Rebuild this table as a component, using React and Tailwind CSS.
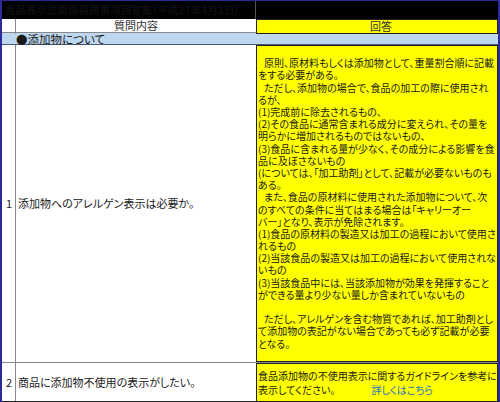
const answer1 = [
  { t: '原則、原材料もしくは添加物として、重量割合順に記載', indent: true },
  { t: 'をする必要がある。' },
  { t: 'ただし、添加物の場合で、食品の加工の際に使用され', indent: true },
  { t: 'るが、' },
  { t: '(1)完成前に除去されるもの、' },
  { t: '(2)その食品に通常含まれる成分に変えられ、その量を' },
  { t: '明らかに増加されるものではないもの、' },
  { t: '(3)食品に含まれる量が少なく、その成分による影響を食' },
  { t: '品に及ぼさないもの' },
  { t: '(については、「加工助剤」として、記載が必要ないものも' },
  { t: 'ある。' },
  { t: 'また、食品の原材料に使用された添加物について、次', indent: true },
  { t: 'のすべての条件に当てはまる場合は「キャリーオー' },
  { t: 'バー」となり、表示が免除されます。' },
  { t: '(1)食品の原材料の製造又は加工の過程において使用さ' },
  { t: 'れるもの' },
  { t: '(2)当該食品の製造又は加工の過程において使用されな' },
  { t: 'いもの' },
  { t: '(3)当該食品中には、当該添加物が効果を発揮すること' },
  { t: 'ができる量より少ない量しか含まれていないもの' },
  { t: '' },
  { t: 'ただし、アレルゲンを含む物質であれば、加工助剤とし', indent: true },
  { t: 'て添加物の表記がない場合であっても必ず記載が必要' },
  { t: 'となる。' },
]

const font = "font-['Noto_Sans_CJK_JP','Noto_Sans',sans-serif] [font-feature-settings:'palt']"

function App() {
  return (
    <div className={`w-[500px] h-[402px] bg-white overflow-hidden border-t border-l-2 border-r-2 border-[#2a2a9c] text-[#1a1a1a] ${font}`}>
      {/* title bar */}
      <div className="h-[18px] bg-black grid grid-cols-[254px_1fr]">
        <div className="border-r border-[#555] pl-[3px] text-[10.5px] leading-[18px] font-bold text-[#0e0e0e] whitespace-nowrap overflow-hidden">
          食品表示法関係質問事項回答集（平成27年4月1日）
        </div>
        <div />
      </div>

      {/* header */}
      <div className="grid grid-cols-[14px_240px_1fr] h-[14px] border-b border-[#8a8a8a] text-[11px] leading-[13px] text-[#333]">
        <div className="border-r border-[#8a8a8a]" />
        <div className="text-center">質問内容</div>
        <div className="bg-[#ffff00] border border-[#222] text-center pl-[8px]">回答</div>
      </div>

      {/* section */}
      <div className="h-[12px] bg-[#bdd7ee] border-b border-[#4a5a70] pl-[14px] text-[11.5px] leading-[12px] whitespace-nowrap">
        ●添加物について
      </div>

      {/* row 1 */}
      <div className="grid grid-cols-[14px_240px_1fr] h-[318px] border-b border-[#8a8a8a] text-[11px]">
        <div className="border-r border-[#8a8a8a] flex items-center justify-end pr-[3px]">1</div>
        <div className="flex items-center pl-[2px] whitespace-nowrap">添加物へのアレルゲン表示は必要か。</div>
        <div className="bg-[#ffff00] border border-[#222] flex flex-col justify-center pl-[1px] text-[10px] leading-[12.2px] overflow-hidden">
          {answer1.map((l, i) => (
            <div key={i} className={`whitespace-nowrap h-[12.2px] ${l.indent ? 'pl-[6px]' : ''}`}>{l.t}</div>
          ))}
        </div>
      </div>

      {/* row 2 */}
      <div className="grid grid-cols-[14px_240px_1fr] h-[39px] border-b border-[#222] text-[11px]">
        <div className="border-r border-[#8a8a8a] flex items-center justify-end pr-[3px]">2</div>
        <div className="flex items-center pl-[2px] whitespace-nowrap">商品に添加物不使用の表示がしたい。</div>
        <div className="bg-[#ffff00] border-x border-t border-[#222] flex flex-col justify-center pl-[1px] text-[10px] leading-[14px] overflow-hidden">
          <div className="whitespace-nowrap">食品添加物の不使用表示に関するガイドラインを参考に</div>
          <div className="whitespace-nowrap">
            表示してください。<span className="ml-[36px] text-[#1f6fc4]">詳しくはこちら</span>
          </div>
        </div>
      </div>
    </div>
  )
}

export default App
